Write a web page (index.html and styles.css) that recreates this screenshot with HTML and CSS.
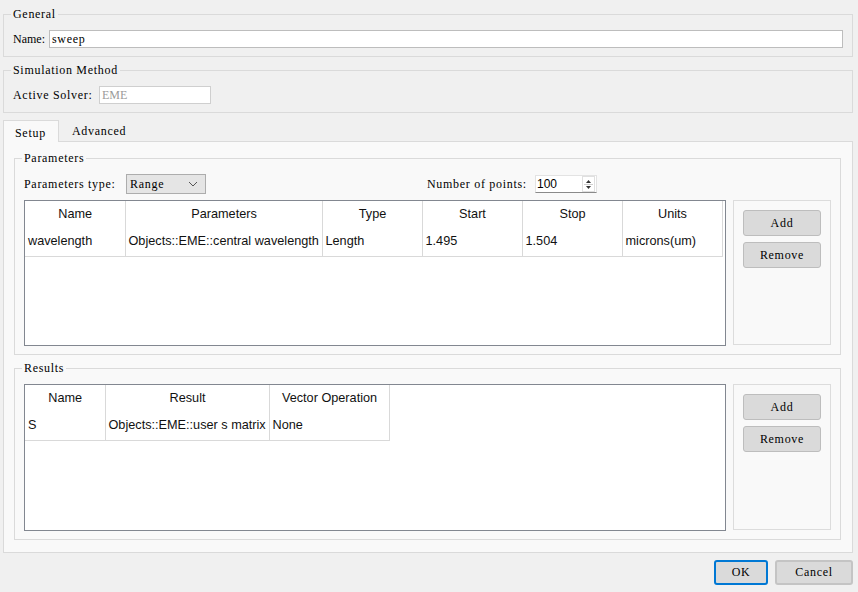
FILE: index.html
```html
<!DOCTYPE html>
<html>
  <head>
    <title>Sweep</title>
    <meta charset="UTF-8">
    <link rel="stylesheet" href="styles.css">
  </head>
  <body>
    <div class="dialog">

      <fieldset class="group">
        <legend>General</legend>
        <div class="row">
          <label class="lbl-name">Name:</label>
          <input type="text" class="edit name-edit" value="sweep">
        </div>
      </fieldset>

      <fieldset class="group sim">
        <legend>Simulation Method</legend>
        <div class="row">
          <label class="lbl-solver">Active Solver:</label>
          <input type="text" class="edit solver-edit" value="EME" disabled>
        </div>
      </fieldset>

      <div class="tabbar">
        <span class="tab active">Setup</span>
        <span class="tab">Advanced</span>
      </div>

      <div class="pane">
        <fieldset class="group params">
          <legend>Parameters</legend>
          <div class="row toprow">
            <label class="lbl-type">Parameters type:</label>
            <div class="combo">
              <span>Range</span>
              <svg width="10" height="6" viewBox="0 0 10 6"><path d="M1 1 L5 5 L9 1" fill="none" stroke="#555" stroke-width="1"/></svg>
            </div>
            <label class="lbl-points">Number of points:</label>
            <div class="spin">
              <span>100</span>
              <div class="arrows">
                <svg width="11" height="15" viewBox="0 0 11 15">
                  <path d="M3 6 L5.5 3 L8 6 Z" fill="#333"/>
                  <line x1="1" y1="7.5" x2="10" y2="7.5" stroke="#d0d0d0"/>
                  <path d="M3 9 L5.5 12 L8 9 Z" fill="#333"/>
                </svg>
              </div>
            </div>
          </div>
          <div class="tablerow">
            <div class="grid">
              <table>
                <tr>
                  <th class="c100">Name</th>
                  <th class="c197">Parameters</th>
                  <th class="c100">Type</th>
                  <th class="c100">Start</th>
                  <th class="c100">Stop</th>
                  <th class="c100">Units</th>
                </tr>
                <tr>
                  <td>wavelength</td>
                  <td>Objects::EME::central wavelength</td>
                  <td>Length</td>
                  <td>1.495</td>
                  <td>1.504</td>
                  <td>microns(um)</td>
                </tr>
              </table>
            </div>
            <div class="btnpanel">
              <button>Add</button>
              <button>Remove</button>
            </div>
          </div>
        </fieldset>

        <fieldset class="group results">
          <legend>Results</legend>
          <div class="tablerow">
            <div class="grid tall">
              <table>
                <tr>
                  <th class="c80">Name</th>
                  <th class="c164">Result</th>
                  <th class="c120">Vector Operation</th>
                </tr>
                <tr>
                  <td>S</td>
                  <td>Objects::EME::user s matrix</td>
                  <td>None</td>
                </tr>
              </table>
            </div>
            <div class="btnpanel tall">
              <button>Add</button>
              <button>Remove</button>
            </div>
          </div>
        </fieldset>
      </div>

      <div class="footer">
        <button class="ok">OK</button>
        <button class="cancel">Cancel</button>
      </div>

    </div>
  </body>
</html>
```

FILE: styles.css
```css
body {
  margin: 0;
  background-color: #f0f0f0;
  font-family: "Liberation Serif", serif;
  font-size: 12px;
  letter-spacing: 0.7px;
  color: #000;
}

.dialog {
  width: 858px;
  height: 592px;
  box-sizing: border-box;
  padding: 8px 5px 0 3px;
  display: flex;
  flex-direction: column;
}

.group {
  margin: 0;
  min-width: 0;
  border: 1px solid #dadada;
  padding: 10px 9px 8px 9px;
}

.group legend {
  padding: 0 2px;
  margin-left: -2px;
  height: 12px;
  line-height: 12px;
}

.sim {
  margin-top: 7px;
}

.row {
  display: flex;
  align-items: center;
}

.row label {
  flex: none;
}

.lbl-name {
  width: 36px;
  letter-spacing: 0;
}

.lbl-solver {
  width: 86px;
}

.lbl-type {
  width: 102px;
}

.lbl-points {
  width: 108px;
  margin-left: 221px;
}

.edit {
  height: 18px;
  box-sizing: border-box;
  border: 1px solid #bdbdbd;
  background-color: #fff;
  font-family: "Liberation Serif", serif;
  font-size: 12px;
  letter-spacing: 0.7px;
  padding: 0 2px;
  margin: 0;
  color: #000;
}

.name-edit {
  flex: 1;
}

.solver-edit {
  width: 112px;
  color: #9a9a9a;
  border-color: #cfcfcf;
  letter-spacing: 0;
}

.tabbar {
  margin-top: 7px;
  height: 21px;
  display: flex;
  align-items: flex-end;
}

.tab {
  height: 21px;
  line-height: 21px;
  padding: 0 9px;
  box-sizing: border-box;
}

.tab.active {
  width: 56px;
  height: 22px;
  line-height: 24px;
  padding-left: 11px;
  border: 1px solid #dadada;
  border-bottom: none;
  background-color: #f9f9f9;
  margin-bottom: -1px;
  position: relative;
  z-index: 1;
}

.tab + .tab {
  padding-left: 13px;
  line-height: 22px;
}

.pane {
  border: 1px solid #dadada;
  background-color: #f9f9f9;
  padding: 10px 11px 12px 10px;
  height: 412px;
  box-sizing: border-box;
}

.results {
  margin-top: 7px;
}

.toprow {
  height: 20px;
}

.combo {
  width: 80px;
  height: 20px;
  box-sizing: border-box;
  border: 1px solid #adadad;
  background-color: #e5e5e5;
  display: flex;
  align-items: center;
  justify-content: space-between;
  padding: 0 7px 0 3px;
}

.spin {
  width: 62px;
  height: 18px;
  box-sizing: border-box;
  background-color: #fff;
  border: 1px solid #e3e3e3;
  border-bottom-color: #8a8a8a;
  display: flex;
  align-items: center;
  justify-content: space-between;
  padding-left: 1px;
  font-family: "Liberation Sans", sans-serif;
  font-size: 12px;
  letter-spacing: 0;
}

.arrows {
  width: 13px;
  height: 16px;
  margin-right: 1px;
  border: 1px solid #e0e0e0;
  box-sizing: border-box;
  display: flex;
}

.tablerow {
  display: flex;
  margin-top: 6px;
}

.results .tablerow {
  margin-top: 0;
}

.grid {
  width: 702px;
  height: 146px;
  box-sizing: border-box;
  border: 1px solid #828790;
  background-color: #fff;
}

.grid.tall {
  height: 147px;
}

table {
  border-collapse: collapse;
  table-layout: fixed;
  font-family: "Liberation Sans", sans-serif;
  font-size: 12.7px;
  letter-spacing: 0;
  color: #111;
}

th, td {
  box-sizing: border-box;
  border-right: 1px solid #d9d9d9;
  padding: 0 2px 0 3px;
  white-space: nowrap;
  overflow: hidden;
}

th {
  font-weight: normal;
  height: 26px;
  text-align: center;
}

td {
  height: 29px;
  border-bottom: 1px solid #d9d9d9;
  text-align: left;
  padding-bottom: 1px;
}

.c100 { width: 100px; }
.c197 { width: 197px; }
.c80 { width: 80px; }
.c164 { width: 164px; }
.c120 { width: 120px; }

.btnpanel {
  width: 98px;
  height: 145px;
  box-sizing: border-box;
  margin-left: 7px;
  border: 1px solid #dcdcdc;
  padding: 9px 0 0 9px;
  display: flex;
  flex-direction: column;
  gap: 6px;
}

.btnpanel.tall {
  height: 146px;
}

button {
  width: 78px;
  height: 26px;
  box-sizing: border-box;
  border: 1px solid #bdbdbd;
  border-radius: 3px;
  background-color: #dadada;
  font-family: "Liberation Serif", serif;
  font-size: 12px;
  letter-spacing: 0.7px;
  color: #000;
  padding: 0;
}

.footer {
  display: flex;
  justify-content: flex-end;
  gap: 7px;
  margin-top: 7px;
}

.footer button {
  height: 25px;
}

.ok {
  width: 54px;
  border: 2px solid #0078d4;
}

.cancel {
  width: 78px;
  border: 2px solid #c4c4c4;
}
```
